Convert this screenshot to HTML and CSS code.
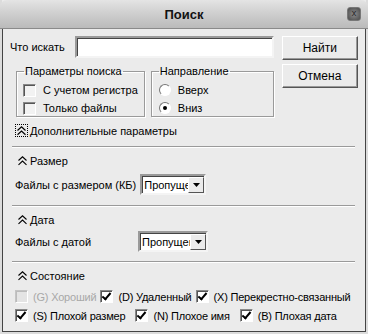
FILE: index.html
```html
<!DOCTYPE html>
<html lang="ru">
<head>
    <meta charset="UTF-8">
    <title>Поиск</title>
    <link rel="stylesheet" href="styles.css">
</head>
<body>
    <div class="window">
        <div class="titlebar">
            <span class="title">Поиск</span>
            <span class="close">x</span>
        </div>
        <div class="body">
            <div class="top">
                <div class="top-left">
                    <div class="search-row">
                        <label class="search-label">Что искать</label>
                        <div class="input"></div>
                    </div>
                    <div class="groups">
                        <fieldset class="group group-params">
                            <legend>Параметры поиска</legend>
                            <div class="opt"><span class="check"></span>С учетом регистра</div>
                            <div class="opt"><span class="check"></span>Только файлы</div>
                        </fieldset>
                        <fieldset class="group group-dir">
                            <legend>Направление</legend>
                            <div class="opt"><span class="radio"></span>Вверх</div>
                            <div class="opt"><span class="radio on"></span>Вниз</div>
                        </fieldset>
                    </div>
                </div>
                <div class="buttons">
                    <div class="btn">Найти</div>
                    <div class="btn">Отмена</div>
                </div>
            </div>

            <div class="more"><span class="chev focus">
                <svg width="9" height="10" viewBox="0 0 9 10"><path d="M0.5 4.5 L4.5 0.8 L8.5 4.5 M0.5 8.8 L4.5 5.1 L8.5 8.8" fill="none" stroke="#000" stroke-width="1.2"/></svg>
            </span>Дополнительные параметры</div>

            <div class="section sec-size">
                <div class="sec-title"><span class="chev">
                    <svg width="9" height="10" viewBox="0 0 9 10"><path d="M0.5 4.5 L4.5 0.8 L8.5 4.5 M0.5 8.8 L4.5 5.1 L8.5 8.8" fill="none" stroke="#000" stroke-width="1.1"/></svg>
                </span>Размер</div>
                <div class="field-row">
                    <span class="field-label">Файлы с размером (КБ)</span>
                    <div class="select"><span class="sel-text">Пропущен</span><span class="sel-btn"><svg width="7" height="4" viewBox="0 0 7 4"><path d="M0 0 H7 L3.5 4 Z" fill="#000"/></svg></span></div>
                </div>
            </div>

            <div class="section sec-date">
                <div class="sec-title"><span class="chev">
                    <svg width="9" height="10" viewBox="0 0 9 10"><path d="M0.5 4.5 L4.5 0.8 L8.5 4.5 M0.5 8.8 L4.5 5.1 L8.5 8.8" fill="none" stroke="#000" stroke-width="1.1"/></svg>
                </span>Дата</div>
                <div class="field-row">
                    <span class="field-label date-label">Файлы с датой</span>
                    <div class="select date-select"><span class="sel-text">Пропущен</span><span class="sel-btn"><svg width="7" height="4" viewBox="0 0 7 4"><path d="M0 0 H7 L3.5 4 Z" fill="#000"/></svg></span></div>
                </div>
            </div>

            <div class="section sec-state">
                <div class="sec-title"><span class="chev">
                    <svg width="9" height="10" viewBox="0 0 9 10"><path d="M0.5 4.5 L4.5 0.8 L8.5 4.5 M0.5 8.8 L4.5 5.1 L8.5 8.8" fill="none" stroke="#000" stroke-width="1.1"/></svg>
                </span>Состояние</div>
                <div class="states states-1">
                    <span class="state disabled"><span class="check"></span>(G) Хороший</span>
                    <span class="state"><span class="check on"></span>(D) Удаленный</span>
                    <span class="state"><span class="check on"></span>(X) Перекрестно-связанный</span>
                </div>
                <div class="states states-2">
                    <span class="state"><span class="check on"></span>(S) Плохой размер</span>
                    <span class="state"><span class="check on"></span>(N) Плохое имя</span>
                    <span class="state"><span class="check on"></span>(B) Плохая дата</span>
                </div>
            </div>
        </div>
    </div>
</body>
</html>
```

FILE: styles.css
```css
* {
    box-sizing: border-box;
    margin: 0;
    padding: 0;
}
body {
    background: #ffffff;
    font-family: "Liberation Sans", Arial, sans-serif;
    font-size: 11px;
    color: #000;
    white-space: nowrap;
}
.window {
    width: 368px;
    height: 334px;
    background: #ebebeb;
    border-left: 2px solid #dcdcdc;
    border-right: 2px solid #dcdcdc;
    border-bottom: 2px solid #dcdcdc;
    display: flex;
    flex-direction: column;
}
.titlebar {
    height: 29px;
    margin: 0 -2px;
    border-radius: 7px 7px 0 0;
    background: linear-gradient(#e4e4e4, #d2d2d2 40%, #bababa);
    border-bottom: 1px solid #8a8a8a;
    position: relative;
    display: flex;
    align-items: center;
    justify-content: center;
    flex: none;
}
.title {
    font-weight: bold;
    font-size: 13px;
    color: #111;
}
.close {
    position: absolute;
    right: 7px;
    top: 7px;
    width: 14px;
    height: 14px;
    border-radius: 3px;
    background: radial-gradient(#8e8e8e, #4a4a4a);
    border: 1px solid #777;
    color: #222;
    font-size: 9px;
    line-height: 11px;
    text-align: center;
}
.body {
    flex: 1;
    border-left: 1px solid #444;
    border-right: 1px solid #444;
    border-bottom: 1px solid #444;
    padding: 7px 8px 0 7px;
}
.top {
    display: flex;
    gap: 8px;
}
.top-left {
    flex: 1;
}
.search-row {
    display: flex;
    align-items: center;
    justify-content: space-between;
    height: 22px;
}
.input {
    width: 199px;
    height: 22px;
    background: #fff;
    border: 2px solid;
    border-color: #9a9a9a #f4f4f4 #f4f4f4 #9a9a9a;
    box-shadow: inset 1px 1px 0 #444;
}
.buttons {
    display: flex;
    flex-direction: column;
    gap: 4px;
}
.btn {
    width: 76px;
    height: 24px;
    border: 1px solid;
    border-color: #fff #555 #555 #fff;
    box-shadow: inset -1px -1px 0 #999;
    font-size: 12px;
    display: flex;
    align-items: center;
    justify-content: center;
}
.groups {
    display: flex;
    gap: 6px;
    margin-top: 7px;
    padding-left: 6px;
}
.group {
    border: 1px solid #9a9a9a;
    box-shadow: 1px 1px 0 #fff, inset 1px 1px 0 #fff;
    padding: 3px 6px 0 6px;
    height: 52px;
}
.group-params {
    width: 125px;
}
.group-dir {
    width: 123px;
}
.group legend {
    padding: 0 1px;
    margin-left: 1px;
    line-height: 13px;
}
.opt {
    display: flex;
    align-items: center;
    height: 18px;
}
.check {
    width: 13px;
    height: 13px;
    margin-right: 7px;
    background: #f2f2f2;
    border: 1px solid;
    border-color: #888 #fff #fff #888;
    box-shadow: inset 1px 1px 0 #555;
    position: relative;
    flex: none;
}
.check.on {
    background: #fff;
}
.check.on::after {
    content: "";
    position: absolute;
    left: 3px;
    top: 0px;
    width: 3px;
    height: 7px;
    border: solid #000;
    border-width: 0 2px 2px 0;
    transform: rotate(40deg);
}
.radio {
    width: 12px;
    height: 12px;
    border-radius: 50%;
    margin-right: 7px;
    background: #fff;
    border: 1px solid;
    border-color: #777 #fff #fff #777;
    position: relative;
    flex: none;
}
.radio.on::after {
    content: "";
    position: absolute;
    left: 3px;
    top: 3px;
    width: 4px;
    height: 4px;
    border-radius: 50%;
    background: #000;
}
.group-dir .opt {
    padding-left: 1px;
}
.more {
    display: flex;
    align-items: center;
    margin-top: 6px;
    padding-left: 5px;
    height: 15px;
}
.chev {
    width: 10px;
    height: 13px;
    display: flex;
    align-items: center;
    justify-content: center;
    margin-right: 3px;
}
.chev.focus {
    width: 13px;
    margin-right: 2px;
    outline: 1px dotted #000;
    outline-offset: -1px;
}
.section {
    border-top: 1px solid #9a9a9a;
    box-shadow: inset 0 1px 0 #fff;
    margin: 8px 2px 0 2px;
    padding: 6px 0 0 3px;
}
.sec-date {
    margin-top: 10px;
}
.sec-state {
    margin-top: 9px;
}
.sec-title {
    display: flex;
    align-items: center;
    height: 15px;
}
.sec-title .chev {
    margin-left: 2px;
}
.field-row {
    display: flex;
    align-items: center;
    margin-top: 6px;
}
.sec-date .field-row {
    margin-top: 4px;
}
.field-label {
    margin-right: 4px;
}
.date-label {
    width: 123px;
    margin-right: 0;
}
.select {
    width: 66px;
    height: 21px;
    background: #fff;
    border: 2px solid;
    border-color: #9a9a9a #f4f4f4 #f4f4f4 #9a9a9a;
    box-shadow: inset 1px 1px 0 #444;
    display: flex;
    align-items: center;
    padding-left: 2px;
}
.date-select {
    width: 70px;
}
.sel-text {
    flex: 1;
    overflow: hidden;
}
.sel-btn {
    width: 16px;
    height: 16px;
    background: #ebebeb;
    border: 1px solid;
    border-color: #fff #555 #555 #fff;
    display: flex;
    align-items: center;
    justify-content: center;
    flex: none;
}
.states {
    display: flex;
    align-items: center;
    height: 19px;
    letter-spacing: -0.2px;
}
.states-1 {
    margin-top: 4px;
    gap: 4px;
}
.states-2 {
    gap: 10px;
}
.state {
    display: flex;
    align-items: center;
}
.state .check {
    margin-right: 5px;
}
.state.disabled {
    color: #a8a8a8;
}
.state.disabled .check {
    background: #e4e4e4;
    border-color: #c4c4c4 #fff #fff #c4c4c4;
    box-shadow: inset 1px 1px 0 #bbb;
}
```
